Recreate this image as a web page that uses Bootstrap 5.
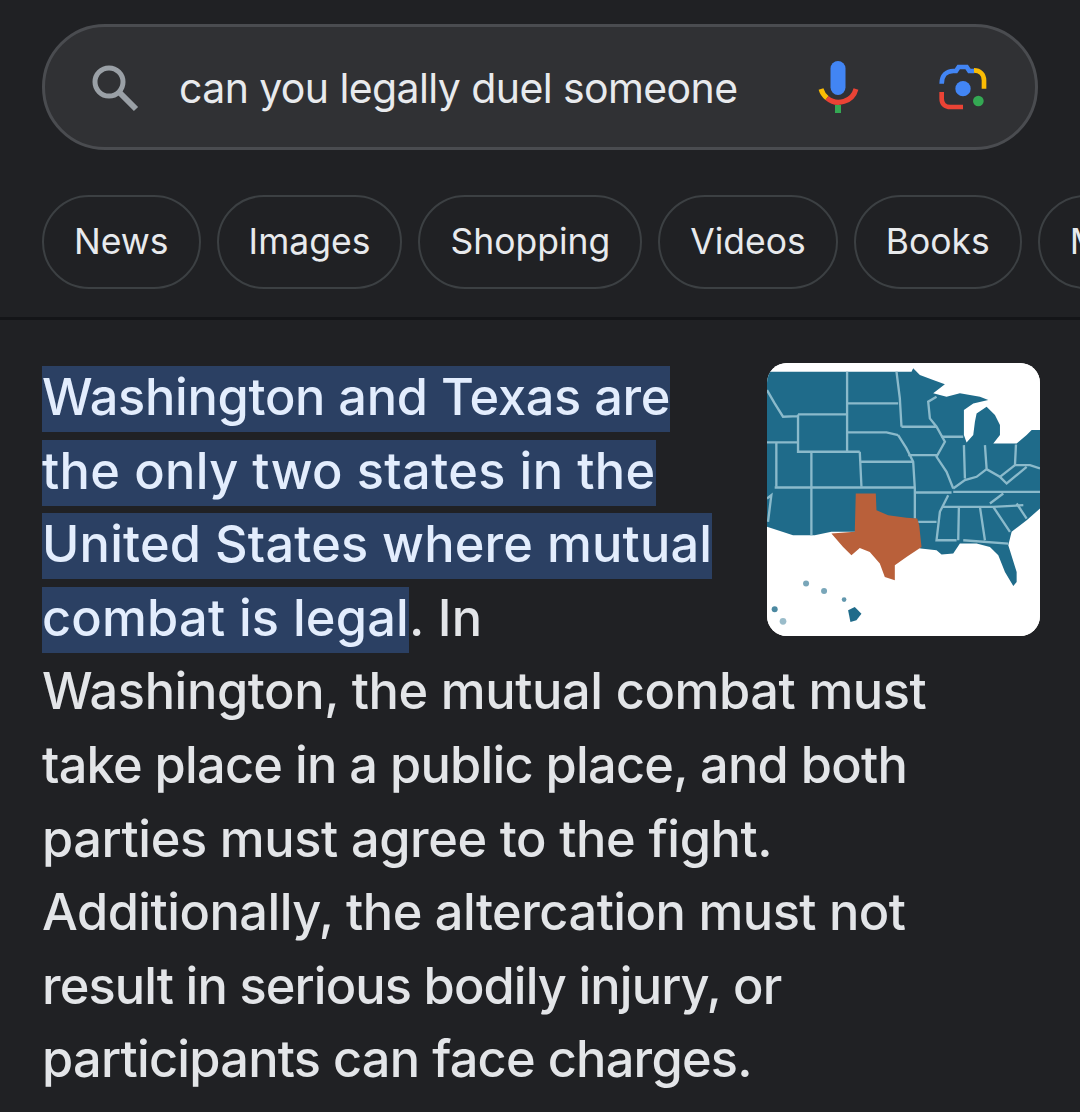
<!DOCTYPE html>
<html lang="en">
<head>
<meta charset="utf-8">
<title>can you legally duel someone</title>
<link href="https://cdn.jsdelivr.net/npm/bootstrap@5.3.0/dist/css/bootstrap.min.css" rel="stylesheet">
<style>
html,body{height:1112px;overflow:hidden}
body{background:#202124;color:#e8eaed;font-family:Inter,"Liberation Sans",sans-serif;width:1080px}
.top-area{padding:24px 0 0 42px;height:317px}
.search-pill{width:996px;height:126px;background:#303134;border:3px solid #4a4c50;border-radius:63px}
.search-glass{width:52px;height:52px;margin-left:44px}
.search-text{font-size:41px;letter-spacing:-.6px;margin:2px 0 0 38px;width:590px;white-space:nowrap;line-height:1}
.mic-icon{width:44px;height:58px;margin:6px 0 0 47px}
.lens-icon{width:54px;height:54px;margin:4px 0 0 79px}
.chip-row{gap:16px;margin-top:45px;overflow:hidden;width:1038px}
.chip-item{height:94px;padding:0 30px;border:2.5px solid #3c4043;border-radius:47px;font-size:35.5px;flex:none;color:#e8eaed}
.divider-line{height:3px;background:#141518}
.answer-area{padding:40px 40px 0 42px}
.map-tile{float:right;width:273px;height:273px;margin:3px 0 30px 30px;border-radius:20px;overflow:hidden;background:#fff}
.map-tile svg{display:block;width:100%;height:100%;filter:blur(.7px)}
.answer-text{font-size:50.5px;line-height:73.6px;font-weight:450;letter-spacing:-.3px;color:#e3e5e8;margin:0;white-space:nowrap}
.answer-sel{background:#2b4063;color:#e3edfd;padding-bottom:5px}
.track-p35{letter-spacing:.35px}
.track-p2{letter-spacing:.2px}
.track-m4{letter-spacing:-.4px}
.track-m5{letter-spacing:-.5px}
.track-m75{letter-spacing:-.75px}
.track-m9{letter-spacing:-.9px}
</style>
</head>
<body>
<div class="top-area">
  <div class="search-pill d-flex align-items-center">
    <svg class="search-glass" viewBox="0 0 52 52" fill="none" stroke="#9aa0a6"><circle cx="20" cy="21" r="14" stroke-width="5"/><path d="M30 31l17 17" stroke-width="6"/></svg>
    <div class="search-text">can you legally duel someone</div>
    <svg class="mic-icon" viewBox="0 0 44 58" fill="none">
      <rect x="14.500" y="0" width="15" height="34" rx="7.500" fill="#4285f4"/>
      <path d="M5 28a18 18 0 0 0 6 9" stroke="#fbbc04" stroke-width="5"/>
      <path d="M11 37a18 18 0 0 0 29-9" stroke="#ea4335" stroke-width="5"/>
      <rect x="19" y="44" width="6" height="8" fill="#34a853"/>
    </svg>
    <svg class="lens-icon" viewBox="450 70 162 162" fill="none" stroke-width="14">
      <path d="M458 135c0-25 15-38 35-38h8l8-12h24l8 12h15" stroke="#4285f4"/>
      <path d="M555 95c18 0 30 12 30 30v25" stroke="#fbbc04"/>
      <path d="M458 160v20c0 16 10 25 26 25h38" stroke="#ea4335"/>
      <circle cx="522" cy="150" r="23" fill="#4285f4" stroke="none"/>
      <circle cx="568" cy="187" r="16" fill="#34a853" stroke="none"/>
    </svg>
  </div>
  <div class="chip-row d-flex">
    <div class="chip-item d-flex align-items-center">News</div>
    <div class="chip-item d-flex align-items-center">Images</div>
    <div class="chip-item d-flex align-items-center">Shopping</div>
    <div class="chip-item d-flex align-items-center">Videos</div>
    <div class="chip-item d-flex align-items-center">Books</div>
    <div class="chip-item d-flex align-items-center">Maps</div>
  </div>
</div>
<div class="divider-line"></div>
<div class="answer-area">
  <div class="map-tile">
    <svg viewBox="22 24 818 818" role="img" aria-label="Map of the southern United States with Texas highlighted">
      <rect x="22" y="24" width="818" height="818" fill="#fff"/>
      <path fill="#1f6b8a" d="M22 50H455L460 40 480 60 520 75 555 88 520 115 560 125 600 115 660 125 685 135 640 145 612 165 612 240 620 262 640 240 645 200 650 175 680 155 705 180 720 210 720 240 700 265H770L800 240 815 225H840V460L800 495 755 530 745 570 770 650 770 680 760 692 735 650 715 600 690 575 650 565 600 565 580 595 545 598 530 585 483 580 300 530 215 530 165 540 100 540 22 515Z"/>
      <g fill="none" stroke="#8bbacb" stroke-width="7">
        <path d="M262 50V290M262 145H415M410 50L420 130 425 215M262 232H380L415 240"/>
        <path d="M115 178H262M115 178V290H300M22 105L45 145 70 185 115 183M22 262H115M50 262V395M155 290V540M300 290L305 395M305 320H460"/>
        <path d="M45 397H465M415 240L440 280 460 320 465 400V490M425 215H530M445 300H535M530 125L505 140 510 190 530 215 555 260 530 305 560 350 580 400"/>
        <path d="M545 245H610M612 270L615 370M675 270L680 340M768 268L765 330M580 400L615 375 650 365 680 342 720 365 765 330H810L840 340"/>
        <path d="M580 410H720L840 410M720 365L740 385 800 335M545 455H700L790 450M465 412H575M475 500H530M565 420L540 470 530 555H590"/>
        <path d="M597 455L595 555M660 455L675 555M610 555L745 565M700 455L750 530M770 445L800 490M690 445L730 415M22 430L35 420 25 500"/>
      </g>
      <path fill="#b9603a" d="M288 415H348L350 465 385 480 440 488 472 490 478 510 485 575 440 605 405 630 405 675 375 665 360 625 330 590 300 578 275 600 250 575 215 535 285 530Z"/>
      <g fill="#1f6b8a">
        <path d="M265 765L285 755 305 775 290 795 272 800Z"/>
        <circle cx="139" cy="685" r="9" opacity=".6"/><circle cx="193" cy="707" r="9" opacity=".6"/><circle cx="253" cy="733" r="7" opacity=".7"/><circle cx="45" cy="762" r="9" opacity=".8"/><circle cx="70" cy="798" r="10" opacity=".45"/>
      </g>
    </svg>
  </div>
  <p class="answer-text"><span class="answer-sel">Washington and Texas are</span><br><span class="answer-sel track-p35">the only two states in the</span><br><span class="answer-sel track-p2">United States where mutual</span><br><span class="track-p2"><span class="answer-sel">combat is legal</span>. In</span><br><span class="track-m4">Washington, the mutual combat must</span><br><span class="track-m75">take place in a public place, and both</span><br><span class="track-m4">parties must agree to the fight.</span><br><span class="track-m5">Additionally, the altercation must not</span><br><span class="track-m9">result in serious bodily injury, or</span><br><span class="track-m75">participants can face charges.</span></p>
</div>
<script src="https://cdn.jsdelivr.net/npm/bootstrap@5.3.0/dist/js/bootstrap.bundle.min.js"></script>
</body>
</html>
